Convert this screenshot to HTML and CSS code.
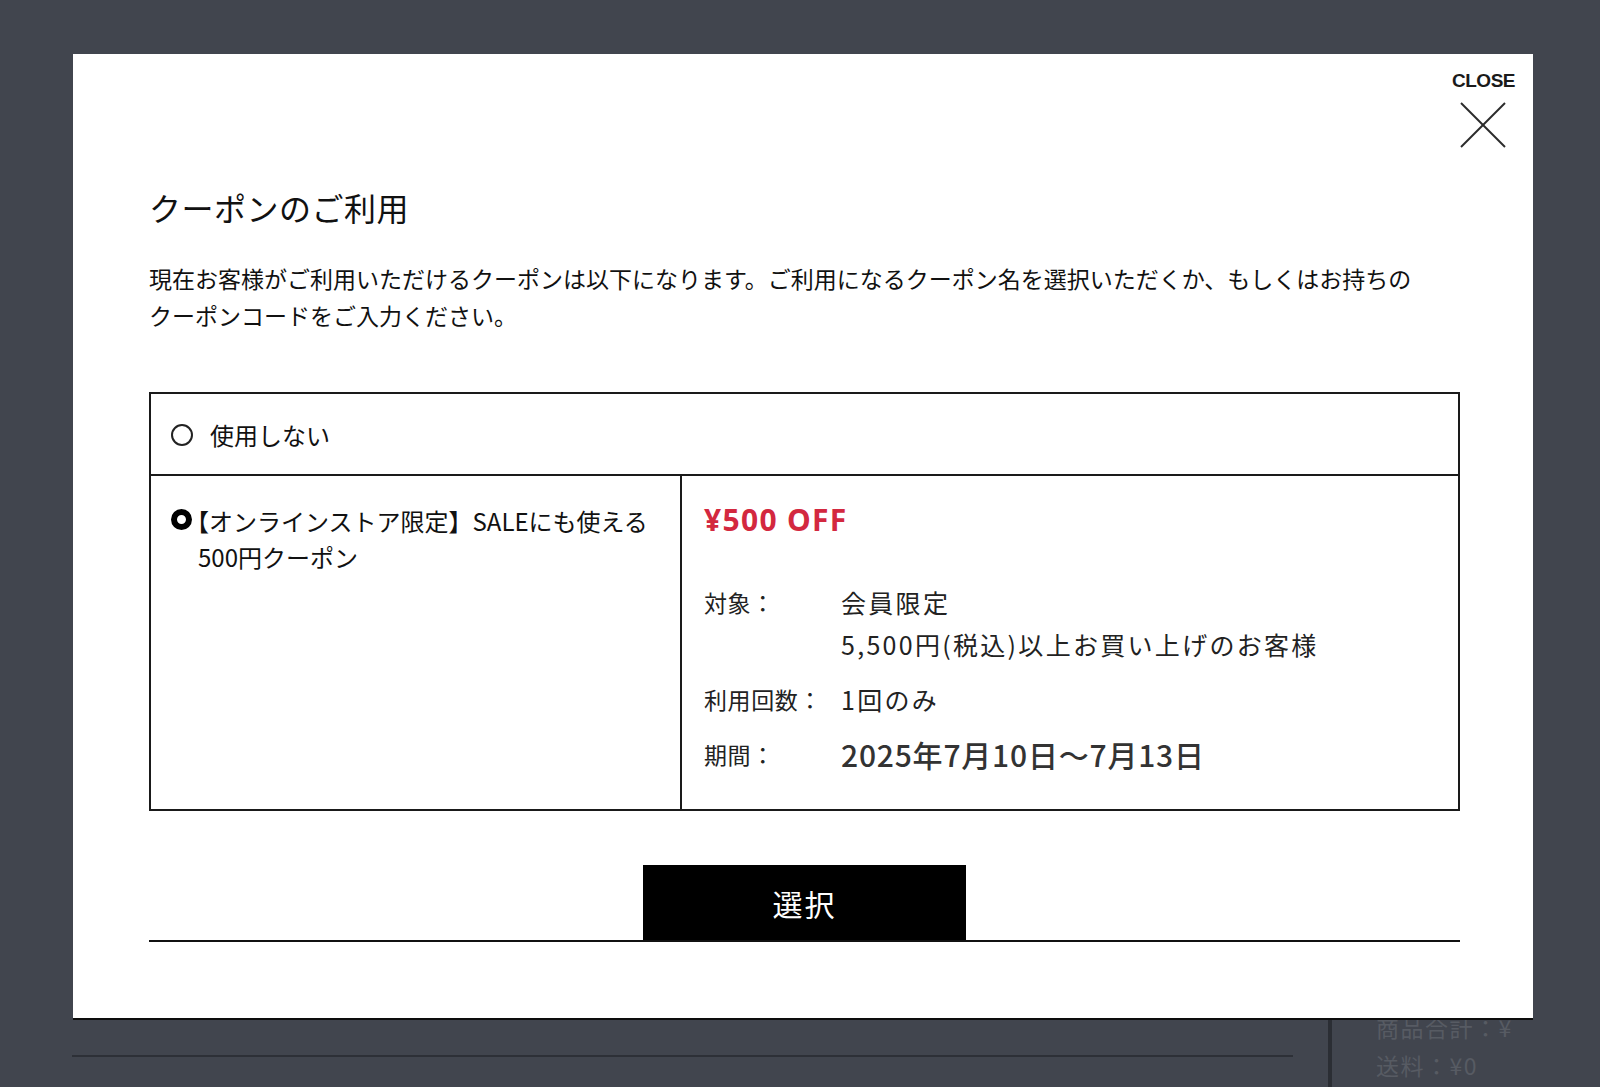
FILE: index.html
```html
<!DOCTYPE html>
<html lang="ja">
<head>
<meta charset="utf-8">
<title>クーポンのご利用</title>
<link rel="stylesheet" href="styles.css">
</head>
<body>
<div class="page">
  <div class="page-bottom">
    <div class="cart-line"></div>
    <div class="page-divider"></div>
    <div class="summary">
      <div class="summary-line">商品合計：¥</div>
      <div class="summary-line">送料：¥0</div>
    </div>
  </div>
</div>

<div class="modal">
  <button class="close-btn" type="button">
    <span class="close-label">CLOSE</span>
    <svg class="close-icon" width="46" height="46" viewBox="0 0 46 46" aria-hidden="true">
      <line x1="1" y1="1" x2="45" y2="45" stroke="#2b2b2b" stroke-width="2"/>
      <line x1="45" y1="1" x2="1" y2="45" stroke="#2b2b2b" stroke-width="2"/>
    </svg>
  </button>

  <div class="modal-body">
    <h1 class="modal-title">クーポンのご利用</h1>
    <p class="modal-desc">現在お客様がご利用いただけるクーポンは以下になります。ご利用になるクーポン名を選択いただくか、もしくはお持ちの<br>クーポンコードをご入力ください。</p>

    <div class="coupon-table">
      <div class="row-none">
        <span class="radio"></span>
        <span class="none-label">使用しない</span>
      </div>
      <div class="row-coupon">
        <div class="coupon-name">
          <span class="radio radio-checked"></span>
          <span class="coupon-text"><span class="lbracket">【</span>オンラインストア限定】SALEにも使える<br>500円クーポン</span>
        </div>
        <div class="coupon-detail">
          <div class="coupon-price">¥500 OFF</div>
          <div class="detail-grid">
            <div class="detail-label">対象：</div>
            <div class="detail-value">会員限定<br>5,500円(税込)以上お買い上げのお客様</div>
            <div class="detail-label">利用回数：</div>
            <div class="detail-value">1回のみ</div>
            <div class="detail-label">期間：</div>
            <div class="detail-value detail-date">2025年7月10日〜7月13日</div>
          </div>
        </div>
      </div>
    </div>

    <div class="action">
      <button class="select-btn" type="button">選択</button>
    </div>
  </div>
</div>
</body>
</html>
```

FILE: styles.css
```css
* {
  box-sizing: border-box;
}

html, body {
  margin: 0;
  padding: 0;
}

body {
  width: 1600px;
  height: 1087px;
  overflow: hidden;
  background: #41454e;
  font-family: "Noto Sans CJK JP", "Noto Sans", sans-serif;
  color: #111;
  position: relative;
}

/* underlying page (dimmed) */
.page {
  height: 1087px;
}

.page-bottom {
  display: flex;
  align-items: flex-start;
  padding-top: 1010px;
  padding-left: 72px;
}

.cart-line {
  width: 1221px;
  height: 47px;
  border-bottom: 2px solid #2d3037;
}

.page-divider {
  width: 4px;
  height: 80px;
  margin-left: 35px;
  background: #2b2e34;
}

.summary {
  margin-left: 44px;
  margin-top: -2px;
  white-space: nowrap;
  color: #575b63;
  font-size: 23px;
  line-height: 38px;
  letter-spacing: 1.5px;
}

/* modal */
.modal {
  position: absolute;
  top: 54px;
  left: 73px;
  width: 1460px;
  height: 966px;
  background: #fff;
  border-bottom: 2px solid #0d0d0d;
}

.close-btn {
  position: absolute;
  top: 16px;
  right: 18px;
  display: flex;
  flex-direction: column;
  align-items: center;
  gap: 10px;
  padding: 0;
  border: 0;
  background: none;
  cursor: pointer;
}

.close-label {
  font-family: "Liberation Sans", Arial, sans-serif;
  font-weight: 700;
  font-size: 19px;
  line-height: 22px;
  letter-spacing: -0.5px;
  color: #1a1a1a;
}

.close-icon {
  display: block;
  margin-right: 2px;
}

.modal-body {
  padding: 130px 73px 0 76px;
}

.modal-title {
  margin: 0;
  font-size: 32px;
  font-weight: 400;
  line-height: 46px;
  color: #111;
  letter-spacing: 0.5px;
}

.modal-desc {
  margin: 30px 0 0;
  font-size: 23px;
  line-height: 37px;
  color: #111;
  white-space: nowrap;
}

.coupon-table {
  margin-top: 58px;
  border: 2px solid #1a1a1a;
}

.row-none {
  display: flex;
  align-items: center;
  height: 82px;
  padding-left: 20px;
  padding-top: 2px;
  border-bottom: 2px solid #1a1a1a;
}

.radio {
  flex: none;
  display: inline-block;
  width: 22px;
  height: 22px;
  border: 2px solid #222;
  border-radius: 50%;
  background: #fff;
}

.radio-checked {
  width: 21px;
  height: 21px;
  border: 6px solid #000;
  background: #fff;
}

.none-label {
  margin-left: 17px;
  font-size: 24px;
  line-height: 36px;
  color: #111;
}

.row-coupon {
  display: grid;
  grid-template-columns: 531px 1fr;
}

.coupon-name {
  display: flex;
  align-items: flex-start;
  padding: 27px 10px 0 20px;
  border-right: 2px solid #1a1a1a;
}

.coupon-name .radio {
  margin-top: 6px;
}

.coupon-text {
  margin-left: 6px;
  font-size: 24px;
  line-height: 36px;
  color: #111;
}

.lbracket {
  margin-left: -13px;
}

.coupon-detail {
  padding: 24px 20px 34px 22px;
}

.coupon-price {
  font-size: 30px;
  font-weight: 700;
  line-height: 40px;
  letter-spacing: 1.3px;
  color: #d3283f;
  font-family: "Noto Sans", "Noto Sans CJK JP", sans-serif;
}

.detail-grid {
  display: grid;
  grid-template-columns: 137px 1fr;
  row-gap: 13px;
  margin-top: 41px;
  color: #222;
}

.detail-label {
  font-size: 23px;
  line-height: 42px;
  letter-spacing: 0.6px;
}

.detail-value {
  font-size: 25px;
  line-height: 42px;
  letter-spacing: 2.3px;
}

.detail-date {
  font-size: 30px;
  font-weight: 500;
  letter-spacing: 0.8px;
  color: #333;
}

.action {
  display: flex;
  justify-content: center;
  margin-top: 54px;
  border-bottom: 2px solid #111;
}

.select-btn {
  width: 323px;
  height: 75px;
  border: 0;
  border-radius: 0;
  background: #000;
  color: #fff;
  font-family: "Noto Sans CJK JP", sans-serif;
  font-size: 30px;
  letter-spacing: 2px;
  cursor: pointer;
  padding: 0;
}
```
